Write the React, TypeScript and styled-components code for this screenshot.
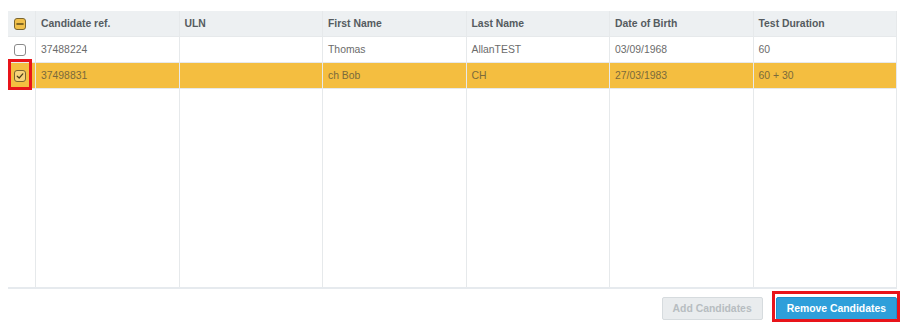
import React from "react";
import styled, { createGlobalStyle } from "styled-components";

const Global = createGlobalStyle`
  html, body { margin: 0; padding: 0; background: #fff; }
  body { font-family: "Liberation Sans", Arial, sans-serif; }
`;

const Page = styled.div`
  width: 912px;
  height: 334px;
  box-sizing: border-box;
  padding: 11px 15px 0 8px;
  display: flex;
  flex-direction: column;
`;

const Table = styled.div`
  height: 278px;
  display: flex;
  flex-direction: column;
  border-right: 1px solid #e6e9eb;
  border-bottom: 2px solid #e6eaee;
  box-sizing: border-box;
`;

const Row = styled.div<{ $variant?: "head" | "body" | "selected" | "filler" }>`
  display: grid;
  grid-template-columns: 27px repeat(6, 1fr);
  height: ${(p) => (p.$variant === "filler" ? "auto" : "26px")};
  flex: ${(p) => (p.$variant === "filler" ? "1" : "none")};
  background: ${(p) =>
    p.$variant === "head" ? "#edf0f2" : p.$variant === "selected" ? "#f4be40" : "#fff"};
  border-bottom: ${(p) => (p.$variant === "filler" ? "none" : "1px solid #e6e9eb")};
  box-sizing: border-box;
`;

const Cell = styled.div<{ $head?: boolean; $box?: boolean; $sel?: boolean }>`
  display: flex;
  align-items: center;
  justify-content: ${(p) => (p.$box ? "center" : "flex-start")};
  padding-left: ${(p) => (p.$box ? "0" : "5px")};
  border-left: ${(p) => (p.$box ? "none" : "1px solid #e6e9eb")};
  font-size: 10.4px;
  font-weight: ${(p) => (p.$head ? 700 : 400)};
  color: ${(p) => (p.$head ? "#555b60" : p.$sel ? "#7a6a3c" : "#6b6b6b")};
  white-space: nowrap;
  overflow: ${(p) => (p.$box ? "visible" : "hidden")};
  position: relative;
`;

const Box = styled.span<{ $state: "off" | "on" | "mixed" }>`
  width: 12px;
  height: 12px;
  box-sizing: border-box;
  border-radius: 3px;
  border: 1px solid ${(p) => (p.$state === "off" ? "#8a8a8a" : "#7a6530")};
  background: ${(p) =>
    p.$state === "off" ? "#fff" : p.$state === "mixed" ? "#f1c04a" : "#f6d27a"};
  display: flex;
  align-items: center;
  justify-content: center;
  margin-left: -3px;
`;

const Highlight = styled.span`
  position: absolute;
  left: 0;
  top: -4px;
  width: 24px;
  height: 31px;
  box-sizing: border-box;
  border: 3px solid #e8141a;
`;

const Footer = styled.div`
  display: flex;
  justify-content: flex-end;
  align-items: center;
  gap: 13px;
  margin-top: 8px;
`;

const Button = styled.button<{ $primary?: boolean }>`
  height: 23px;
  box-sizing: border-box;
  padding: 0 10px;
  border-radius: 2px;
  font-family: "Liberation Sans", Arial, sans-serif;
  font-size: 10.4px;
  font-weight: 700;
  border: 1px solid ${(p) => (p.$primary ? "#1f8fca" : "#d6dbde")};
  background: ${(p) => (p.$primary ? "#2e9fda" : "#e9ecee")};
  color: ${(p) => (p.$primary ? "#fff" : "#b7bdc1")};
  position: relative;
`;

const ButtonFrame = styled.span`
  position: absolute;
  left: -5px;
  top: -7px;
  right: -4px;
  bottom: -3px;
  border: 3px solid #e8141a;
  pointer-events: none;
`;

const headers = ["Candidate ref.", "ULN", "First Name", "Last Name", "Date of Birth", "Test Duration"];
const rows = [
  { sel: false, cells: ["37488224", "", "Thomas", "AllanTEST", "03/09/1968", "60"] },
  { sel: true, cells: ["37498831", "", "ch Bob", "CH", "27/03/1983", "60 + 30"] },
];

const Dash = () => (
  <svg width="8" height="8" viewBox="0 0 8 8">
    <path d="M1 4h6" stroke="#5c4a18" strokeWidth="1.6" strokeLinecap="round" />
  </svg>
);
const Check = () => (
  <svg width="8" height="8" viewBox="0 0 8 8">
    <path d="M1.2 4.2 3.2 6 6.8 1.8" stroke="#4a3d1c" strokeWidth="1.2" fill="none" strokeLinecap="round" strokeLinejoin="round" />
  </svg>
);

export default function App() {
  return (
    <Page>
      <Global />
      <Table>
        <Row $variant="head">
          <Cell $box>
            <Box $state="mixed">
              <Dash />
            </Box>
          </Cell>
          {headers.map((h) => (
            <Cell key={h} $head>
              {h}
            </Cell>
          ))}
        </Row>
        {rows.map((r, i) => (
          <Row key={i} $variant={r.sel ? "selected" : "body"}>
            <Cell $box>
              {r.sel && <Highlight />}
              <Box $state={r.sel ? "on" : "off"}>{r.sel && <Check />}</Box>
            </Cell>
            {r.cells.map((c, j) => (
              <Cell key={j} $sel={r.sel}>
                {c}
              </Cell>
            ))}
          </Row>
        ))}
        <Row $variant="filler">
          <Cell $box />
          {headers.map((h) => (
            <Cell key={h} />
          ))}
        </Row>
      </Table>
      <Footer>
        <Button disabled>Add Candidates</Button>
        <Button $primary>
          Remove Candidates
          <ButtonFrame />
        </Button>
      </Footer>
    </Page>
  );
}
